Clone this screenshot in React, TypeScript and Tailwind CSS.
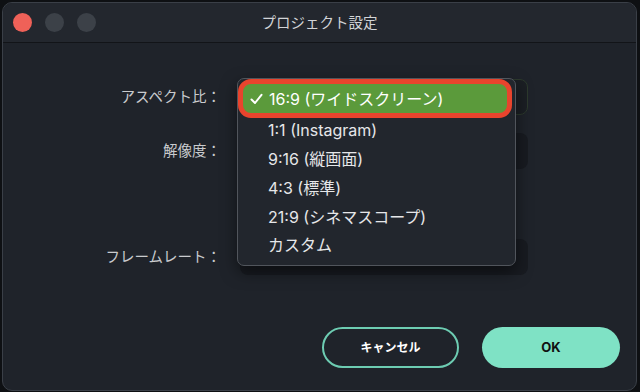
import React from "react";

const font = { fontFamily: '"Inter", "Noto Sans CJK JP", sans-serif' };

const options = ["1:1 (Instagram)", "9:16 (縦画面)", "4:3 (標準)", "21:9 (シネマスコープ)", "カスタム"];

function Check() {
  return (
    <svg width="13" height="12" viewBox="0 0 13 12" fill="none">
      <path d="M1.5 6.5 L5 10 L11.5 1.8" stroke="white" strokeWidth="2" strokeLinecap="round" strokeLinejoin="round" />
    </svg>
  );
}

export default function App() {
  return (
    <div className="w-[640px] h-[392px] bg-[#0e1013] pt-[2px] pl-[2px] pr-[3px] pb-[1px]" style={font}>
      <div className="relative flex flex-col h-full rounded-[10px] bg-[#1f232a] border border-[#3a3f47] overflow-hidden">
        {/* title bar */}
        <div className="relative h-[40px] shrink-0 flex items-center pl-[10px] gap-[13px] bg-[#23272e] border-b border-[#121418]">
          <span className="w-[19px] h-[19px] rounded-full bg-[#ef6158]" />
          <span className="w-[19px] h-[19px] rounded-full bg-[#3c4148]" />
          <span className="w-[19px] h-[19px] rounded-full bg-[#3c4148]" />
          <div className="absolute inset-0 flex items-center justify-center text-[14.5px] text-[#d2d4d7]">
            プロジェクト設定
          </div>
        </div>

        {/* form */}
        <div className="flex flex-col pt-[36px]">
          <div className="flex items-center gap-[19px]">
            <div className="w-[218px] text-right text-[14.5px] text-[#c9cbce]">アスペクト比：</div>
            <div className="w-[288px] h-[36px] rounded-[8px] bg-[#1b1f24] border border-[#2d3a2e]" />
          </div>
          <div className="flex items-center gap-[19px] mt-[18px]">
            <div className="w-[218px] text-right text-[14.5px] text-[#c9cbce]">解像度：</div>
            <div className="w-[288px] h-[36px] rounded-[8px] bg-[#181b21]" />
          </div>
          <div className="flex items-center gap-[19px] mt-[70px]">
            <div className="w-[218px] text-right text-[14.5px] text-[#c9cbce]">フレームレート：</div>
            <div className="w-[288px] h-[36px] rounded-[8px] bg-[#181b21]" />
          </div>
        </div>

        {/* buttons */}
        <div className="mt-auto flex justify-end gap-[23px] pr-[16px] pb-[22px]">
          <button className="w-[137px] h-[41px] rounded-full border-2 border-[#6dccb2] text-white font-bold text-[12px]">
            キャンセル
          </button>
          <button className="w-[138px] h-[41px] rounded-full bg-[#7fe2c5] text-[#111] font-bold text-[13px]">
            OK
          </button>
        </div>

        {/* open dropdown */}
        <div className="absolute left-[234px] top-[75px] w-[279px] h-[188px] rounded-[7px] border border-[#51555c] bg-[#22262d] shadow-[0_6px_16px_rgba(0,0,0,0.5)] flex flex-col">
          <div className="w-[274px] h-[39px] rounded-[13px] border-[5px] border-[#e8442d] bg-[#5b9a3b] flex items-center gap-[6px] pl-[7px] text-white text-[16px]">
            <Check />
            <span>16:9 (ワイドスクリーン)</span>
          </div>
          <div className="flex flex-col -mt-[2px]">
            {options.map((o) => (
              <div key={o} className="h-[28.75px] flex items-center pl-[30px] text-[16px] text-[#e6e7e9]">
                {o}
              </div>
            ))}
          </div>
        </div>
      </div>
    </div>
  );
}
